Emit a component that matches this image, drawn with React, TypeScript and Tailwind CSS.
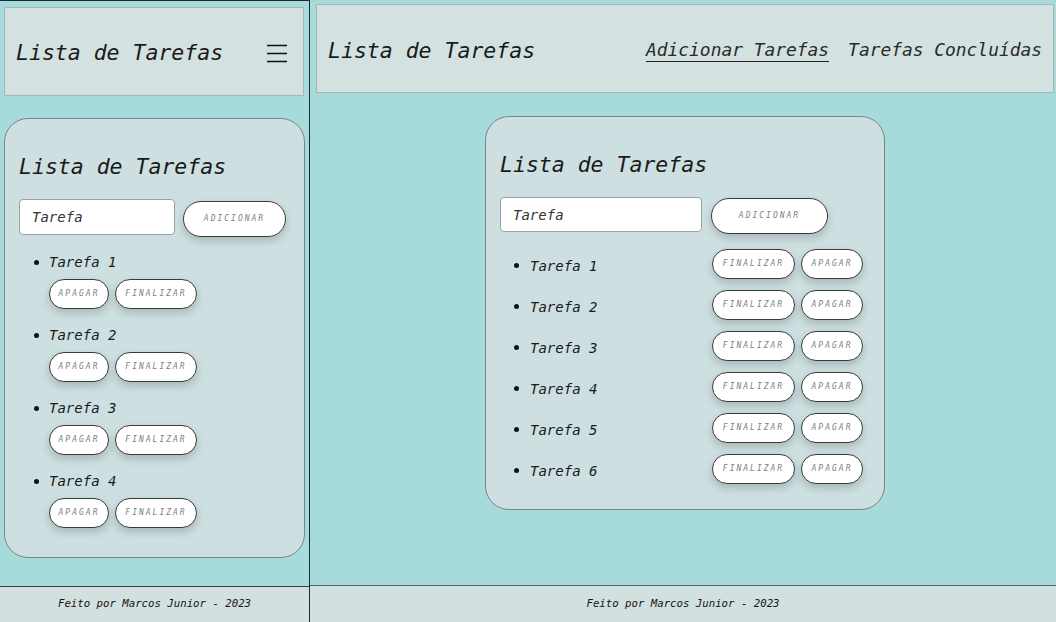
const mobileTasks = ["Tarefa 1", "Tarefa 2", "Tarefa 3", "Tarefa 4"];
const desktopTasks = ["Tarefa 1", "Tarefa 2", "Tarefa 3", "Tarefa 4", "Tarefa 5", "Tarefa 6"];

function PillButton({ label, className }: { label: string; className: string }) {
  return (
    <button
      className={`flex items-center justify-center rounded-full border border-[#3a3a3a] bg-white text-[8px] uppercase tracking-[2px] text-[#7a7f86] shadow-[0_4px_8px_rgba(0,0,0,0.18)] ${className}`}
    >
      {label}
    </button>
  );
}

function Footer({ className }: { className: string }) {
  return (
    <footer className={`flex items-center justify-center bg-[#d2e0df] text-[10.7px] text-[#151515] ${className}`}>
      Feito por Marcos Junior - 2023
    </footer>
  );
}

function Mobile() {
  return (
    <div className="flex w-[310px] flex-col border-r border-t border-[#1b2a30]">
      <header className="ml-[4px] mr-[5px] mt-[6px] flex h-[89px] items-center justify-between border border-[#a9b6b6] bg-[#d3e1e1] pl-[11px] pr-[16px]">
        <h1 className="mt-[2px] text-[21.5px] leading-[28px] text-[#1a1a1a]">Lista de Tarefas</h1>
        <svg width="20" height="20" viewBox="0 0 20 20" className="mt-[2px]">
          <path d="M0 2.5h20M0 10.5h20M0 18.5h20" stroke="#111" strokeWidth="1.6" />
        </svg>
      </header>
      <main className="flex-1 px-[4px] pt-[22px]">
        <div className="rounded-[24px] border border-[#7c8585] bg-[#cddfe0] px-[14px] pb-[29px] pt-[34px]">
          <h2 className="text-[21.5px] leading-[28px] text-[#1a1a1a]">Lista de Tarefas</h2>
          <div className="mt-[18px] flex items-start gap-[8px]">
            <input
              placeholder="Tarefa"
              className="h-[36px] w-[156px] rounded-[4px] border border-[#9aa3a3] bg-white px-[12px] text-[14px] italic text-[#222] outline-none placeholder:text-[#333]"
            />
            <PillButton label="Adicionar" className="mt-[2px] h-[36px] w-[103px]" />
          </div>
          <ul className="mt-[16px] flex flex-col gap-[17px]">
            {mobileTasks.map((t) => (
              <li key={t} className="flex flex-col">
                <div className="flex h-[18px] items-center">
                  <span className="ml-[15px] h-[5px] w-[5px] rounded-full bg-[#111]" />
                  <span className="ml-[10px] text-[14px] leading-[18px] text-[#1a1a1a]">{t}</span>
                </div>
                <div className="ml-[30px] mt-[8px] flex gap-[6px]">
                  <PillButton label="Apagar" className="h-[30px] w-[60px]" />
                  <PillButton label="Finalizar" className="h-[30px] w-[82px]" />
                </div>
              </li>
            ))}
          </ul>
        </div>
      </main>
      <Footer className="h-[36px] border-t border-[#4d3838]" />
    </div>
  );
}

function Desktop() {
  return (
    <div className="flex flex-1 flex-col">
      <header className="ml-[6px] mr-[2px] mt-[4px] flex h-[89px] items-center justify-between border border-[#a9b6b6] bg-[#d3e1e1] pl-[11px] pr-[11px]">
        <h1 className="mt-[4px] text-[21.5px] leading-[28px] text-[#1a1a1a]">Lista de Tarefas</h1>
        <nav className="mt-[4px] flex gap-[19px] text-[17.9px] leading-[22px] text-[#2a2a2a]">
          <a className="border-b-[1.5px] border-[#222]">Adicionar Tarefas</a>
          <a className="border-b-[1.5px] border-transparent">Tarefas Concluídas</a>
        </nav>
      </header>
      <main className="flex flex-1 justify-center pl-[4px] pt-[23px]">
        <div className="h-fit w-[400px] rounded-[24px] border border-[#7c8585] bg-[#cddfe0] px-[14px] pb-[25px] pt-[34px]">
          <h2 className="text-[21.5px] leading-[28px] text-[#1a1a1a]">Lista de Tarefas</h2>
          <div className="mt-[18px] flex items-start gap-[9px]">
            <input
              placeholder="Tarefa"
              className="h-[35px] w-[202px] rounded-[4px] border border-[#9aa3a3] bg-white px-[12px] text-[14px] italic text-[#222] outline-none placeholder:text-[#333]"
            />
            <PillButton label="Adicionar" className="mt-[1px] h-[36px] w-[117px]" />
          </div>
          <ul className="mr-[7px] mt-[15px] flex flex-col gap-[11px]">
            {desktopTasks.map((t) => (
              <li key={t} className="flex h-[30px] items-center justify-between">
                <div className="flex items-center pt-[3px]">
                  <span className="ml-[14px] h-[5px] w-[5px] rounded-full bg-[#111]" />
                  <span className="ml-[11px] text-[14px] leading-[18px] text-[#1a1a1a]">{t}</span>
                </div>
                <div className="flex gap-[6px]">
                  <PillButton label="Finalizar" className="h-[30px] w-[83px]" />
                  <PillButton label="Apagar" className="h-[30px] w-[62px]" />
                </div>
              </li>
            ))}
          </ul>
        </div>
      </main>
      <Footer className="h-[37px] border-t border-[#56626a]" />
    </div>
  );
}

export default function App() {
  return (
    <div className="flex h-[622px] w-[1056px] overflow-hidden bg-[#a7dadb] font-['DejaVu_Sans_Mono',monospace] italic">
      <Mobile />
      <Desktop />
    </div>
  );
}
